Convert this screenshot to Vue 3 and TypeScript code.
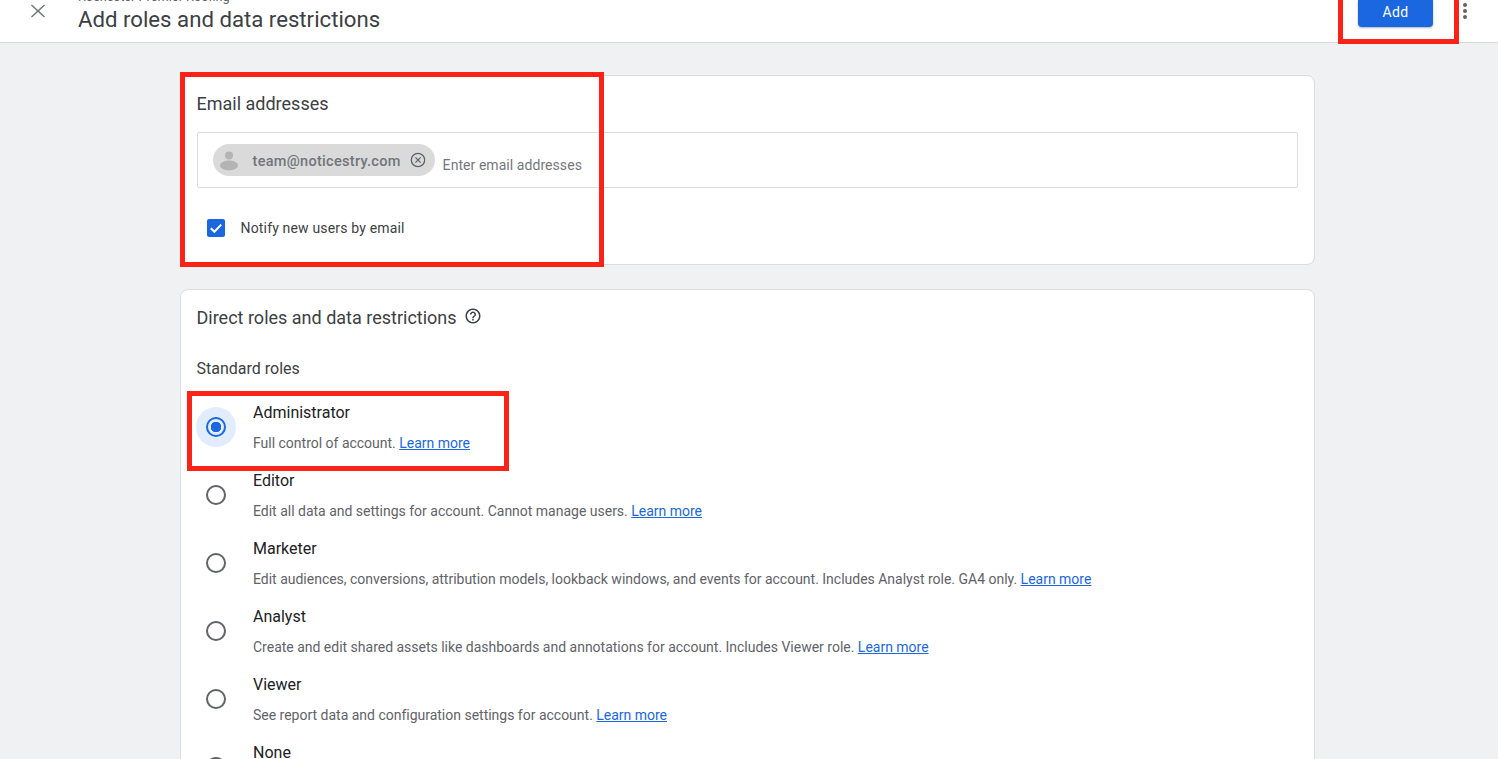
<template>
  <div class="page">
    <header class="topbar">
      <button class="close-btn" aria-label="Close">
        <svg width="24" height="24" viewBox="0 0 24 24"><path d="M19 6.41 18.1 5.5 12 11.1 5.9 5.5 5 6.41 10.9 12 5 17.59 5.9 18.5 12 12.9 18.1 18.5 19 17.59 13.1 12z" fill="#70757a" /></svg>
      </button>
      <div class="titles">
        <div class="subtitle">Rochester Premier Roofing</div>
        <h1>Add roles and data restrictions</h1>
      </div>
      <button class="add-btn">Add</button>
      <svg class="more" width="24" height="24" viewBox="0 0 24 24"><path d="M12 8a2 2 0 1 0 0-4 2 2 0 0 0 0 4zm0 2a2 2 0 1 0 0 4 2 2 0 0 0 0-4zm0 6a2 2 0 1 0 0 4 2 2 0 0 0 0-4z" fill="#5f6368" /></svg>
    </header>

    <main class="content">
      <section class="card email-card">
        <h2>Email addresses</h2>
        <div class="email-input">
          <span class="chip">
            <svg class="chip-avatar" width="24" height="24" viewBox="0 0 24 24"><circle cx="12" cy="7.5" r="4" fill="#b4b4b4" /><ellipse cx="12" cy="17.5" rx="9" ry="5" fill="#b4b4b4" /></svg>
            <span class="chip-text">team@noticestry.com</span>
            <svg class="chip-x" width="18" height="18" viewBox="0 0 18 18"><circle cx="9" cy="9" r="6.7" fill="none" stroke="#5f6368" stroke-width="1.3" /><path d="M6.4 6.4l5.2 5.2M11.6 6.4l-5.2 5.2" stroke="#5f6368" stroke-width="1.3" /></svg>
          </span>
          <span class="placeholder">Enter email addresses</span>
        </div>
        <label class="notify">
          <svg width="18" height="18" viewBox="0 0 18 18"><rect width="18" height="18" rx="2" fill="#1a67e0" /><path d="M3.8 9.2l3.6 3.6 6.8-7.2" fill="none" stroke="#fff" stroke-width="2" /></svg>
          <span>Notify new users by email</span>
        </label>
      </section>

      <section class="card roles-card">
        <h2 class="roles-title">
          Direct roles and data restrictions
          <svg width="18" height="18" viewBox="0 0 24 24"><path d="M11 18h2v-2h-2v2zm1-16C6.48 2 2 6.48 2 12s4.48 10 10 10 10-4.48 10-10S17.52 2 12 2zm0 18c-4.41 0-8-3.59-8-8s3.59-8 8-8 8 3.59 8 8-3.59 8-8 8zm0-14c-2.21 0-4 1.79-4 4h2c0-1.1.9-2 2-2s2 .9 2 2c0 2-3 1.75-3 5h2c0-2.25 3-2.5 3-5 0-2.21-1.79-4-4-4z" fill="#3c4043" /></svg>
        </h2>
        <div class="standard">Standard roles</div>
        <div v-for="role in roles" :key="role.name" class="role">
          <span class="radio-wrap" :class="{ selected: role.selected }">
            <span class="radio"></span>
          </span>
          <div class="role-body">
            <div class="role-name">{{ role.name }}</div>
            <div v-if="role.desc" class="role-desc">{{ role.desc }} <a href="#">Learn more</a></div>
          </div>
        </div>
      </section>
    </main>

    <!-- annotation boxes drawn over the screenshot -->
    <div class="mark mark-add"></div>
    <div class="mark mark-email"></div>
    <div class="mark mark-admin"></div>
  </div>
</template>

<script setup lang="ts">
interface Role {
  name: string
  desc: string
  selected?: boolean
}

const roles: Role[] = [
  { name: 'Administrator', desc: 'Full control of account.', selected: true },
  { name: 'Editor', desc: 'Edit all data and settings for account. Cannot manage users.' },
  { name: 'Marketer', desc: 'Edit audiences, conversions, attribution models, lookback windows, and events for account. Includes Analyst role. GA4 only.' },
  { name: 'Analyst', desc: 'Create and edit shared assets like dashboards and annotations for account. Includes Viewer role.' },
  { name: 'Viewer', desc: 'See report data and configuration settings for account.' },
  { name: 'None', desc: '' }
]
</script>

<style>
html,
body {
  margin: 0;
  overflow: hidden;
}
</style>

<style scoped>
.page {
  position: relative;
  width: 1498px;
  height: 759px;
  overflow: hidden;
  background: #f0f1f3;
  font-family: Roboto, "Liberation Sans", sans-serif;
  color: #202124;
}

.topbar {
  display: flex;
  align-items: flex-start;
  height: 42px;
  background: #fff;
  border-bottom: 1px solid #d5d7da;
}

.close-btn {
  display: flex;
  flex: none;
  margin: -1px 0 0 26px;
  padding: 0;
  border: none;
  background: none;
}

.titles {
  flex: 1;
  margin: -10px 0 0 28px;
}

.subtitle {
  height: 14px;
  font-size: 12.75px;
  line-height: 14px;
  color: #5f6368;
}

h1 {
  margin: 3px 0 0;
  font-size: 22.2px;
  font-weight: 400;
  line-height: 24px;
  color: #3c4043;
}

.add-btn {
  width: 75px;
  height: 27px;
  margin-right: 20px;
  padding: 0 0 4px;
  border: none;
  border-radius: 0 0 4px 4px;
  background: #1a67e0;
  box-shadow: 0 1px 2px rgba(60, 64, 67, 0.4);
  font: 400 14px Roboto, sans-serif;
  letter-spacing: 0.4px;
  color: #fff;
}

.more {
  flex: none;
  margin: -1px 21px 0 0;
}

.content {
  width: 1135px;
  margin: 32px 0 0 179.5px;
}

.card {
  box-sizing: border-box;
  background: #fff;
  border: 1px solid #dadce0;
  border-radius: 8px;
  padding: 0 16px;
}

.email-card {
  height: 190px;
}

h2 {
  margin: 0;
  font-size: 18px;
  font-weight: 400;
  line-height: 24px;
  color: #3c4043;
}

.email-card h2 {
  padding-top: 16px;
}

.email-input {
  display: flex;
  box-sizing: border-box;
  height: 56px;
  margin-top: 16px;
  padding: 11px 15px;
  border: 1px solid #dadce0;
  border-radius: 2px;
}

.chip {
  display: flex;
  align-items: center;
  box-sizing: border-box;
  height: 32px;
  padding: 0 8px 0 4px;
  border-radius: 16px;
  background: #dadada;
}

.chip-avatar {
  flex: none;
}

.chip-text {
  margin: 2px 8px 0 12px;
  font-size: 14.5px;
  font-weight: 500;
  letter-spacing: 0.3px;
  color: #71757a;
}

.placeholder {
  margin: 13px 0 0 8px;
  font-size: 14px;
  line-height: 16px;
  letter-spacing: 0.06px;
  color: #74787c;
}

.notify {
  display: flex;
  align-items: center;
  gap: 16px;
  margin: 30px 0 0 10px;
  font-size: 14px;
  letter-spacing: 0.17px;
  line-height: 20px;
  color: #3c4043;
}

.roles-card {
  height: 560px;
  margin-top: 24px;
}

.roles-title {
  display: flex;
  align-items: center;
  gap: 7px;
  padding-top: 16px;
}

.roles-title svg {
  margin-top: -4px;
}

.standard {
  margin: 27px 0 13px;
  font-size: 16px;
  line-height: 24px;
  color: #3c4043;
}

.role {
  display: flex;
  height: 68px;
}

.radio-wrap {
  display: flex;
  flex: none;
  align-items: center;
  justify-content: center;
  width: 40px;
  height: 40px;
  margin: 13px 17px 0 -0.5px;
  border-radius: 50%;
}

.radio-wrap.selected {
  background: #e2edfb;
}

.radio {
  box-sizing: border-box;
  width: 20px;
  height: 20px;
  border: 2px solid #5f6368;
  border-radius: 50%;
}

.selected .radio {
  border-color: #1a67e0;
  background: radial-gradient(circle, #1a67e0 0 5px, transparent 5.5px);
}

.role-body {
  padding-top: 7px;
}

.role-name {
  font-size: 16px;
  line-height: 24px;
  color: #202124;
}

.role-desc {
  margin-top: 8px;
  font-size: 14px;
  line-height: 20px;
  letter-spacing: -0.008px;
  color: #5f6368;
}

.role-desc a {
  color: #1a67e0;
  text-decoration: underline;
}

.mark {
  position: absolute;
  box-sizing: border-box;
  border: 5px solid #fb2217;
}

.mark-add {
  top: -10px;
  left: 1338px;
  width: 121px;
  height: 54px;
}

.mark-email {
  top: 72px;
  left: 180px;
  width: 424px;
  height: 195px;
}

.mark-admin {
  top: 391px;
  left: 187px;
  width: 322px;
  height: 80px;
}
</style>
